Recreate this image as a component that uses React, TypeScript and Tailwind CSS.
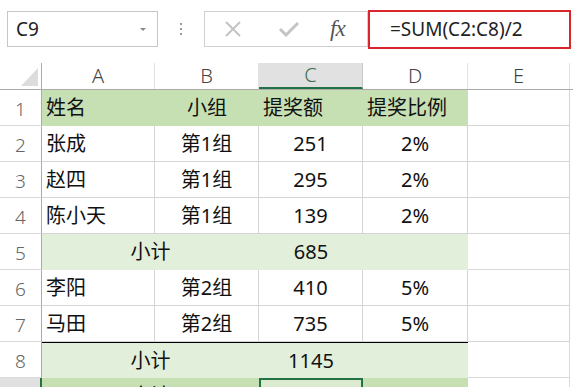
import React from "react";

const cols = ["A", "B", "C", "D", "E"];
const colW = ["w-[113px]", "w-[104px]", "w-[104px]", "w-[105px]", "w-[102px]"];

type Row = {
  n: number;
  kind: "head" | "data" | "sub" | "total";
  a?: string;
  b?: string;
  c?: string;
  d?: string;
};

const rows: Row[] = [
  { n: 1, kind: "head", a: "姓名", b: "小组", c: "提奖额", d: "提奖比例" },
  { n: 2, kind: "data", a: "张成", b: "第1组", c: "251", d: "2%" },
  { n: 3, kind: "data", a: "赵四", b: "第1组", c: "295", d: "2%" },
  { n: 4, kind: "data", a: "陈小天", b: "第1组", c: "139", d: "2%" },
  { n: 5, kind: "sub", b: "小计", c: "685" },
  { n: 6, kind: "data", a: "李阳", b: "第2组", c: "410", d: "5%" },
  { n: 7, kind: "data", a: "马田", b: "第2组", c: "735", d: "5%" },
  { n: 8, kind: "sub", b: "小计", c: "1145" },
  { n: 9, kind: "total", b: "合计", c: "1830" },
];

const font = "font-['Noto_Sans','Noto_Sans_CJK_SC',sans-serif]";

function RowLabel({ n, active }: { n: number; active?: boolean }) {
  return (
    <div
      className={`w-[42px] shrink-0 h-full flex items-end justify-center pb-[2px] text-[19px] font-light border-b border-[#dadada] border-r ${
        active ? "bg-[#e1e1e1] text-[#217346] border-r-[#217346] border-r-2" : "bg-white text-[#666] border-r-[#ababab]"
      }`}
    >
      {n}
    </div>
  );
}

function SheetRow({ r }: { r: Row }) {
  const topBlack = r.n === 8;
  if (r.kind === "sub" || r.kind === "total") {
    const bg = r.kind === "sub" ? "bg-[#e2efda]" : "bg-[#c6e0b4]";
    return (
      <div className="flex h-[36px]">
        <RowLabel n={r.n} active={r.kind === "total"} />
        <div className={`flex ${bg} ${topBlack ? "border-t border-black" : ""}`}>
          <div className="w-[217px] flex items-center justify-center text-[20px] text-[#111]">{r.b}</div>
          <div
            className={`w-[104px] flex items-center justify-center text-[20px] text-[#111] ${
              r.kind === "total" ? "border-2 border-[#217346] bg-[#dcebd0]" : ""
            }`}
          >
            {r.c}
          </div>
          <div className="w-[105px]" />
        </div>
        <div className="w-[102px] border-r border-b border-[#dadada] bg-white" />
      </div>
    );
  }
  const head = r.kind === "head";
  const cell = head ? "bg-[#c6e0b4]" : "bg-white border-r border-b border-[#d4d4d4]";
  const numAlign = head ? "justify-start pl-[4px]" : "justify-center";
  return (
    <div className="flex h-[36px]">
      <RowLabel n={r.n} />
      <div className={`w-[113px] flex items-center pl-[4px] text-[20px] text-[#111] ${cell}`}>{r.a}</div>
      <div className={`w-[104px] flex items-center justify-center text-[20px] text-[#111] ${cell}`}>{r.b}</div>
      <div className={`w-[104px] flex items-center ${numAlign} text-[20px] text-[#111] ${cell}`}>{r.c}</div>
      <div className={`w-[105px] flex items-center ${numAlign} text-[20px] text-[#111] ${cell}`}>{r.d}</div>
      <div className="w-[102px] border-r border-b border-[#d4d4d4] bg-white" />
    </div>
  );
}

export default function App() {
  return (
    <div className={`w-[573px] h-[387px] overflow-hidden bg-white ${font}`}>
      {/* formula bar */}
      <div className="flex items-center h-[63px] pb-[5px]">
        <div className="ml-[7px] w-[151px] h-[36px] border border-[#c6c6c6] flex items-center justify-between pl-[8px] pr-[10px]">
          <span className="text-[19px] text-[#222]">C9</span>
          <svg width="8" height="5" viewBox="0 0 8 5">
            <path d="M1 1 L4 4 L7 1 Z" fill="#888" />
          </svg>
        </div>
        <div className="w-[46px] flex flex-col items-center gap-[3px]">
          <span className="w-[2px] h-[2px] bg-[#999]" />
          <span className="w-[2px] h-[2px] bg-[#999]" />
          <span className="w-[2px] h-[2px] bg-[#999]" />
        </div>
        <div className="w-[164px] h-[36px] border border-[#d0d0d0] flex items-center">
          <svg className="ml-[19px]" width="18" height="18" viewBox="0 0 18 18">
            <path d="M2 2 L16 16 M16 2 L2 16" stroke="#c4c4c4" strokeWidth="2" />
          </svg>
          <svg className="ml-[37px]" width="20" height="16" viewBox="0 0 20 16">
            <path d="M1 8 L7 14 L19 2" stroke="#c4c4c4" strokeWidth="3" fill="none" />
          </svg>
          <span className="ml-[31px] text-[23px] italic text-[#555] font-['Liberation_Serif',serif] tracking-[-1px]">fx</span>
        </div>
        <div className="w-[203px] h-[39px] border-2 border-[#d9262c] flex items-center pl-[20px] text-[19px] text-[#222]">
          =SUM(C2:C8)/2
        </div>
      </div>

      {/* column headers */}
      <div className="flex h-[27px] border-b border-[#ababab]">
        <div className="w-[42px] shrink-0 flex items-end justify-end pr-[3px] pb-[3px] border-r border-[#ababab]">
          <svg width="17" height="18" viewBox="0 0 17 18">
            <path d="M17 0 L17 18 L0 18 Z" fill="#dcdcdc" />
          </svg>
        </div>
        {cols.map((c, i) => (
          <div
            key={c}
            className={`${colW[i]} flex items-center justify-center text-[20px] font-light border-r ${
              c === "C"
                ? "bg-[#e1e1e1] text-[#3c6e4f] border-b-2 border-b-[#217346] border-r-[#c8c8c8]"
                : "text-[#444] border-r-[#e2e2e2]"
            }`}
          >
            {c}
          </div>
        ))}
      </div>

      {rows.map((r) => (
        <SheetRow key={r.n} r={r} />
      ))}
    </div>
  );
}
